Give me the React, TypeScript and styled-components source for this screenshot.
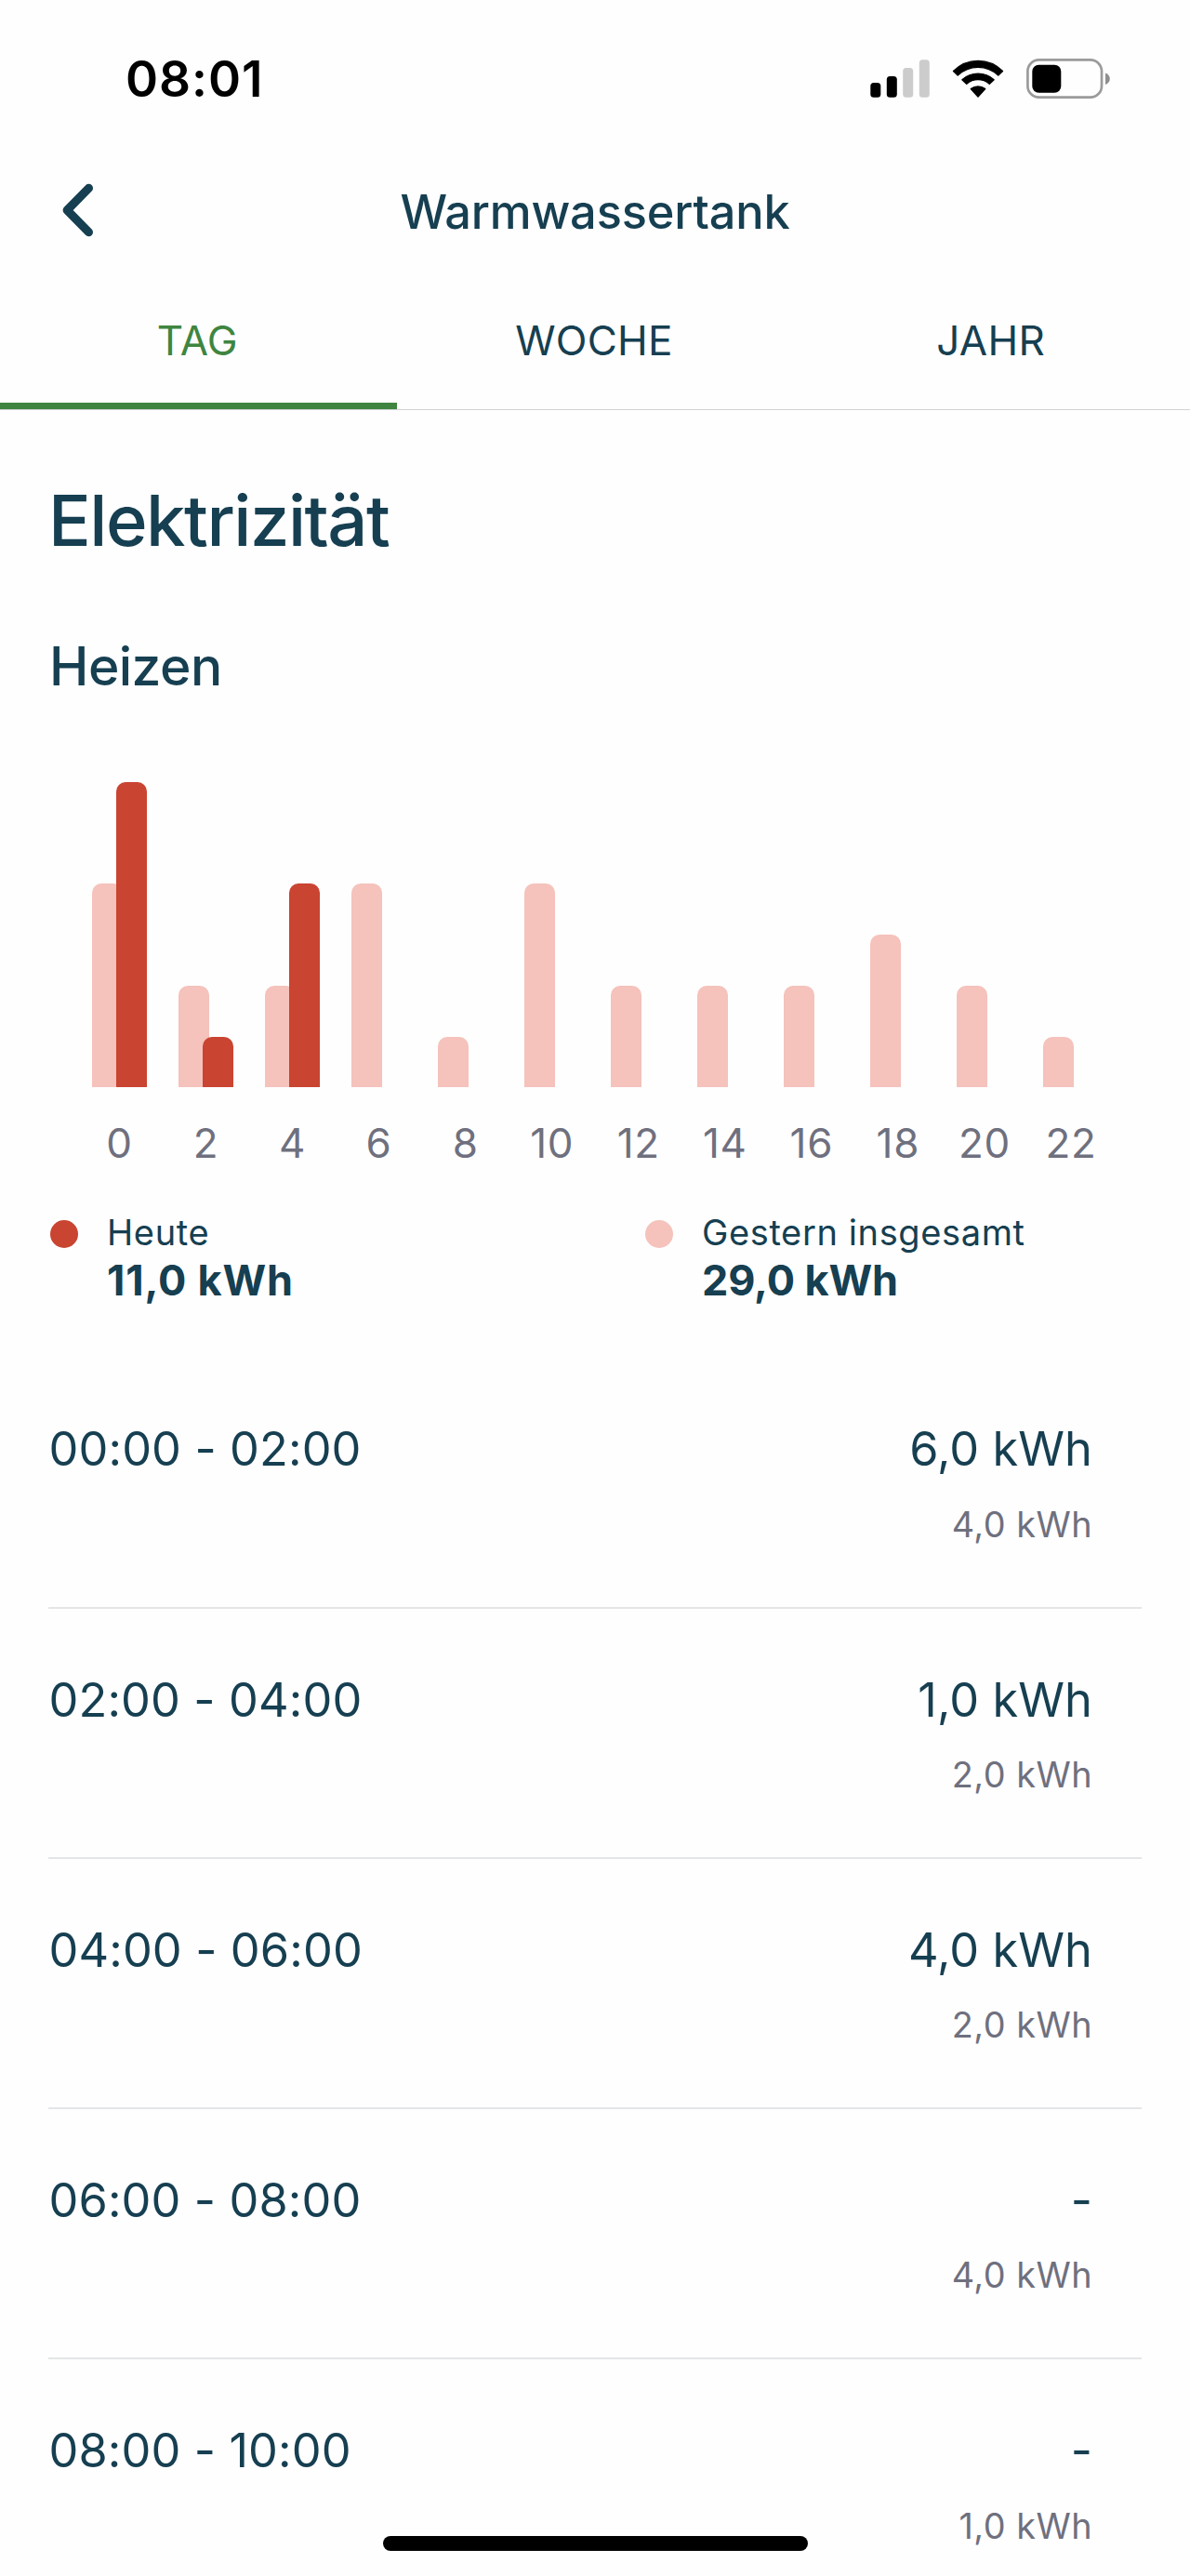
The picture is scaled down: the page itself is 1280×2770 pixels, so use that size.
import React from 'react';
import styled, { createGlobalStyle } from 'styled-components';

const color = {
  ink: '#163f51',
  green: '#3f8540',
  today: '#c94431',
  yesterday: '#f5c2bc',
  muted: '#6f707e',
  line: '#e3e5e7',
  background: '#fefefe',
};

const UNIT_HEIGHT = 54.7;
const SLOT_WIDTH = 93.05;

const GlobalStyle = createGlobalStyle`
  body {
    margin: 0;
    background: ${color.background};
    color: ${color.ink};
    font-family: Inter, "Liberation Sans", sans-serif;
  }
  *, *::before, *::after { box-sizing: border-box; }
  h1, h2, h3, p, ul { margin: 0; padding: 0; }
`;

const Screen = styled.div`
  position: relative;
  width: 1280px;
  height: 2770px;
  overflow: hidden;
  background: ${color.background};
`;

const StatusBar = styled.div`
  display: flex;
  justify-content: space-between;
  align-items: flex-start;
  height: 160px;
  padding: 53px 86px 0 135px;
  color: #000;
`;

const Clock = styled.span`
  font-size: 53.2px;
  font-weight: 600;
  line-height: 64px;
  letter-spacing: 0.96px;
`;

const StatusIcons = styled.div`
  display: flex;
  align-items: flex-start;
  gap: 24px;
  margin-top: 10px;

  svg { display: block; }
`;

const Header = styled.header`
  display: grid;
  grid-template-columns: 160px 1fr 160px;
  align-items: center;
  height: 135px;
`;

const BackButton = styled.button`
  display: flex;
  align-items: center;
  width: 100px;
  height: 100px;
  margin: -3px 0 0 66px;
  padding: 0;
  border: 0;
  background: none;
  color: ${color.ink};
`;

const Title = styled.h1`
  font-size: 50.5px;
  font-weight: 500;
  line-height: 64px;
  letter-spacing: -0.16px;
  text-align: center;
`;

const Tabs = styled.nav`
  display: grid;
  grid-template-columns: repeat(3, 1fr);
  height: 146px;
  border-bottom: 1px solid #d0d2d4;
`;

const Tab = styled.button<{ $active?: boolean }>`
  display: flex;
  justify-content: center;
  align-items: flex-start;
  padding: 41px 2px 0 0;
  border: 0;
  border-bottom: 7px solid ${(p) => (p.$active ? color.green : 'transparent')};
  background: none;
  color: ${(p) => (p.$active ? color.green : color.ink)};
  font: 400 44px/60px Inter, "Liberation Sans", sans-serif;
  letter-spacing: 0.25px;
`;

const Content = styled.main`
  padding: 73px 52px 0;
`;

const SectionTitle = styled.h2`
  font-size: 76px;
  font-weight: 500;
  line-height: 90px;
  letter-spacing: -1.5px;
`;

const ChartTitle = styled.h3`
  margin-top: 78px;
  padding-left: 1px;
  font-size: 57px;
  font-weight: 500;
  line-height: 70px;
  letter-spacing: -0.56px;
`;

const Plot = styled.div`
  display: flex;
  align-items: flex-end;
  height: ${UNIT_HEIGHT * 6}px;
  margin-top: 89px;
  padding-left: 46.8px;
`;

const Slot = styled.div`
  display: flex;
  flex: 0 0 ${SLOT_WIDTH}px;
  align-items: flex-end;
`;

const Bar = styled.div<{ $value: number; $today?: boolean }>`
  width: 33px;
  height: ${(p) => p.$value * UNIT_HEIGHT}px;
  margin-left: ${(p) => (p.$today ? '-7.2px' : '0')};
  border-radius: 10px 10px 0 0;
  background: ${(p) => (p.$today ? color.today : color.yesterday)};
`;

const Axis = styled.div`
  display: flex;
  margin-top: 29.8px;
  padding-left: 30px;
`;

const Tick = styled.span`
  flex: 0 0 ${SLOT_WIDTH}px;
  color: ${color.muted};
  font-size: 44px;
  line-height: 60px;
  letter-spacing: 0.8px;
  font-kerning: none;
  text-align: center;
`;

const Legend = styled.div`
  display: grid;
  grid-template-columns: 640px 1fr;
  margin-top: 42px;
`;

const LegendItem = styled.div`
  display: flex;
  align-items: flex-start;
  gap: 31px;
  padding-left: 2px;
`;

const Dot = styled.span<{ $today?: boolean }>`
  width: 30px;
  height: 30px;
  margin-top: 11px;
  border-radius: 50%;
  background: ${(p) => (p.$today ? color.today : color.yesterday)};
`;

const LegendLabel = styled.p`
  font-size: 38px;
  line-height: 48px;
  letter-spacing: 0.62px;
`;

const LegendValue = styled.p<{ $spacing: number }>`
  font-size: 45px;
  font-weight: 700;
  line-height: 56px;
  letter-spacing: ${(p) => p.$spacing}px;
`;

const List = styled.ul`
  margin-top: 55.5px;
  list-style: none;
`;

const Row = styled.li`
  display: flex;
  justify-content: space-between;
  height: 269.15px;
  padding: 66px 53px 0 0.5px;
  border-bottom: 2px solid ${color.line};
`;

const Period = styled.span`
  font-size: 50.5px;
  line-height: 64px;
  letter-spacing: 0.12px;
`;

const Amounts = styled.div`
  display: flex;
  flex-direction: column;
  align-items: flex-end;
  gap: 24.5px;
`;

const Current = styled.span`
  font-size: 50.5px;
  line-height: 64px;
  letter-spacing: 0.06px;
`;

const Previous = styled.span`
  color: ${color.muted};
  font-size: 37.8px;
  line-height: 48px;
  letter-spacing: 0.49px;
`;

const HomeIndicator = styled.div`
  position: absolute;
  bottom: 27px;
  left: 412px;
  width: 457px;
  height: 16px;
  border-radius: 8px;
  background: #000;
`;

const SignalIcon = () => (
  <svg width="64" height="43" viewBox="0 0 64 43">
    <rect x="0.3" y="26" width="11" height="15.7" rx="3.5" fill="#000" />
    <rect x="17.8" y="19" width="11" height="22.7" rx="3.5" fill="#000" />
    <rect x="35.2" y="10" width="11" height="31.7" rx="3.5" fill="#ccc" />
    <rect x="52.8" y="1.3" width="11" height="40.4" rx="3.5" fill="#ccc" />
  </svg>
);

const WifiIcon = () => (
  <svg width="56" height="43" viewBox="-0.5 -1 56 43">
    <g fill="#000" stroke="#000" strokeWidth="1.4" strokeLinejoin="round">
      <path d="M1 12.6A37 37 0 0 1 54 12.6L49.3 17.1A31.5 31.5 0 0 0 5.7 17.1Z" />
      <path d="M10.4 21.7A25.5 25.5 0 0 1 44.6 21.7L39.8 26.3A18.6 18.6 0 0 0 15.2 26.3Z" />
      <path d="M19.8 31.6A12.5 12.5 0 0 1 35.2 31.6L27.5 40Z" />
    </g>
  </svg>
);

const BatteryIcon = () => (
  <svg width="90" height="43" viewBox="0 0 90 43">
    <rect x="1.4" y="1.4" width="79.6" height="40.2" rx="12.2" fill="none" stroke="#9b9b9b" strokeWidth="2.7" />
    <rect x="6.3" y="6.7" width="31" height="30" rx="7" fill="#000" />
    <path d="M85 15.5C88 16.6 89.8 18.8 89.8 21.8S88 27 85 28.1Z" fill="#8f8f8f" />
  </svg>
);

const ChevronIcon = () => (
  <svg width="36" height="60" viewBox="0 0 36 60">
    <path d="M29.4 6.4L6.2 30L29.4 53.6" fill="none" stroke="currentColor" strokeWidth="9.2" strokeLinecap="round" strokeLinejoin="round" />
  </svg>
);

const hours = [
  { hour: 0, yesterday: 4, today: 6 },
  { hour: 2, yesterday: 2, today: 1 },
  { hour: 4, yesterday: 2, today: 4 },
  { hour: 6, yesterday: 4 },
  { hour: 8, yesterday: 1 },
  { hour: 10, yesterday: 4 },
  { hour: 12, yesterday: 2 },
  { hour: 14, yesterday: 2 },
  { hour: 16, yesterday: 2 },
  { hour: 18, yesterday: 3 },
  { hour: 20, yesterday: 2 },
  { hour: 22, yesterday: 1 },
];

const clock = (hour: number) => `${String(hour).padStart(2, '0')}:00`;
const kwh = (value?: number) => (value ? `${value},0 kWh` : '-');

export default function App() {
  return (
    <>
      <GlobalStyle />
      <Screen>
        <StatusBar>
          <Clock>08:01</Clock>
          <StatusIcons>
            <SignalIcon />
            <WifiIcon />
            <BatteryIcon />
          </StatusIcons>
        </StatusBar>
        <Header>
          <BackButton aria-label="Zurück">
            <ChevronIcon />
          </BackButton>
          <Title>Warmwassertank</Title>
        </Header>
        <Tabs>
          <Tab $active>TAG</Tab>
          <Tab>WOCHE</Tab>
          <Tab>JAHR</Tab>
        </Tabs>
        <Content>
          <SectionTitle>Elektrizität</SectionTitle>
          <ChartTitle>Heizen</ChartTitle>
          <Plot>
            {hours.map((h) => (
              <Slot key={h.hour}>
                <Bar $value={h.yesterday} />
                {h.today && <Bar $today $value={h.today} />}
              </Slot>
            ))}
          </Plot>
          <Axis>
            {hours.map((h) => (
              <Tick key={h.hour}>{h.hour}</Tick>
            ))}
          </Axis>
          <Legend>
            <LegendItem>
              <Dot $today />
              <div>
                <LegendLabel>Heute</LegendLabel>
                <LegendValue $spacing={0.8}>11,0 kWh</LegendValue>
              </div>
            </LegendItem>
            <LegendItem>
              <Dot />
              <div>
                <LegendLabel>Gestern insgesamt</LegendLabel>
                <LegendValue $spacing={-0.1}>29,0 kWh</LegendValue>
              </div>
            </LegendItem>
          </Legend>
          <List>
            {hours.slice(0, 5).map((h) => (
              <Row key={h.hour}>
                <Period>{`${clock(h.hour)} - ${clock(h.hour + 2)}`}</Period>
                <Amounts>
                  <Current>{kwh(h.today)}</Current>
                  <Previous>{kwh(h.yesterday)}</Previous>
                </Amounts>
              </Row>
            ))}
          </List>
        </Content>
        <HomeIndicator />
      </Screen>
    </>
  );
}
